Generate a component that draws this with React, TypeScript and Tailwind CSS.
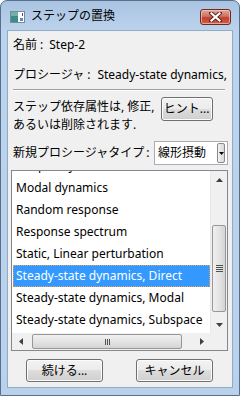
import React from "react";

const FONT = { fontFamily: '"Noto Sans", "Noto Sans CJK JP", sans-serif' };

function WinButton({ children, className }: { children: React.ReactNode; className: string }) {
  return (
    <div
      className={`flex items-center justify-center rounded-[3px] border border-[#707070] bg-[linear-gradient(#f2f2f2_0%,#ebebeb_50%,#dddddd_50%,#cfcfcf_100%)] text-[12px] text-black shadow-[inset_0_0_0_1px_#fcfcfc] ${className}`}
    >
      {children}
    </div>
  );
}

function UpArrow() {
  return (
    <svg width="7" height="4" viewBox="0 0 7 4">
      <path d="M0 4 L3.5 0 L7 4 Z" fill="#404040" />
    </svg>
  );
}
function DownArrow() {
  return (
    <svg width="7" height="4" viewBox="0 0 7 4">
      <path d="M0 0 L3.5 4 L7 0 Z" fill="#404040" />
    </svg>
  );
}
function LeftArrow() {
  return (
    <svg width="4" height="7" viewBox="0 0 4 7">
      <path d="M4 0 L0 3.5 L4 7 Z" fill="#404040" />
    </svg>
  );
}
function RightArrow() {
  return (
    <svg width="4" height="7" viewBox="0 0 4 7">
      <path d="M0 0 L4 3.5 L0 7 Z" fill="#404040" />
    </svg>
  );
}

const items = [
  "Frequency",
  "Modal dynamics",
  "Random response",
  "Response spectrum",
  "Static, Linear perturbation",
  "Steady-state dynamics, Direct",
  "Steady-state dynamics, Modal",
  "Steady-state dynamics, Subspace",
];

export default function App() {
  return (
    <div
      style={FONT}
      className="flex h-[396px] w-[240px] flex-col overflow-hidden rounded-t-[7px] border border-[#55708f] bg-[linear-gradient(#a9c3e1_0px,#bcd3ec_30px,#b9d1ea_100%)]"
    >
      {/* Title bar */}
      <div className="flex h-[29px] shrink-0 items-center">
        <svg width="15" height="12" viewBox="0 0 15 12" className="ml-[9px] mt-[2px]">
          <rect x="0.5" y="0.5" width="14" height="11" fill="#ffffff" stroke="#7a8a9a" />
          <rect x="1" y="1" width="7" height="10" fill="#3f8a8a" />
          <rect x="1" y="1" width="7" height="4" fill="#6fb0a8" />
          <rect x="10" y="7" width="3" height="3" fill="#5a8fb8" />
          <rect x="12" y="2" width="1" height="3" fill="#555" />
        </svg>
        <span className="ml-[6px] mt-[1px] text-[12px] leading-[16px] text-black">ステップの置換</span>
        <div className="ml-auto mr-[8px] mt-[3px] flex h-[16px] w-[31px] items-center justify-center rounded-[3px] border border-[#6b2a25] bg-[linear-gradient(#e3a59a_0%,#d0705f_45%,#c0402e_55%,#d06048_100%)] shadow-[inset_0_0_0_1px_rgba(255,210,200,0.6)]">
          <svg width="13" height="10" viewBox="0 0 13 10">
            <path d="M2 1 L11 9 M11 1 L2 9" stroke="#5a2a25" strokeWidth="4" strokeLinecap="square" />
            <path d="M2.5 1.5 L10.5 8.5 M10.5 1.5 L2.5 8.5" stroke="#ffffff" strokeWidth="2.2" strokeLinecap="square" />
          </svg>
        </div>
      </div>

      {/* Client area */}
      <div className="mx-[6px] mb-[7px] flex flex-1 flex-col border border-[#91aac6] bg-[#f0f0f0] text-[12px] text-black">
        <div className="ml-[5px] mt-[5px] h-[18px] leading-[18px] whitespace-nowrap">
          <span>名前</span>
          <span className="ml-[3px]">:</span>
          <span className="ml-[6px]">Step-2</span>
        </div>
        <div className="ml-[5px] mt-[12px] h-[18px] w-[216px] overflow-hidden leading-[18px] whitespace-nowrap">
          <span>プロシージャ</span>
          <span className="ml-[3px]">:</span>
          <span className="ml-[7px]">Steady-state dynamics, Direct</span>
        </div>
        <div className="ml-[5px] mt-[5px] h-px w-[212px] bg-[#a0a0a0] shadow-[0_1px_0_#ffffff]" />
        <div className="ml-[5px] mt-[7px] flex items-start">
          <div className="mt-[1px] flex flex-col leading-[18px] whitespace-nowrap">
            <span>ステップ依存属性は, 修正,</span>
            <span>あるいは削除されます.</span>
          </div>
          <WinButton className="ml-[6px] h-[24px] w-[52px]">ヒント...</WinButton>
        </div>
        <div className="ml-[5px] mt-[7px] flex items-center">
          <span className="w-[141px] leading-[18px] whitespace-nowrap">
            新規プロシージャタイプ<span className="ml-[2px]">:</span>
          </span>
          <div className="flex h-[24px] w-[74px] items-center border border-[#abadb3] bg-white">
            <span className="ml-[3px] flex-1 leading-[18px] whitespace-nowrap">線形摂動</span>
            <div className="mr-[2px] flex h-[20px] w-[8px] items-center justify-center rounded-[2px] border border-[#8a8a8a] bg-[linear-gradient(90deg,#f2f2f2,#d8d8d8)]">
              <svg width="5" height="3" viewBox="0 0 5 3">
                <path d="M0 0 L2.5 3 L5 0 Z" fill="#000" />
              </svg>
            </div>
          </div>
        </div>

        {/* Listbox */}
        <div className="ml-[3px] mt-[5px] flex h-[181px] w-[217px] flex-col border border-[#828790] bg-white">
          <div className="flex min-h-0 flex-1">
            <div className="min-w-0 flex-1 overflow-hidden">
              <div className="mt-[-16px] pl-px">
                {items.map((t) => {
                  const sel = t === "Steady-state dynamics, Direct";
                  return (
                    <div
                      key={t}
                      className={
                        sel
                          ? "h-[22px] whitespace-nowrap border border-dotted border-[#e0a060] bg-[#3399ff] pl-[2px] leading-[20px] text-white"
                          : "h-[22px] whitespace-nowrap pl-[3px] leading-[22px]"
                      }
                    >
                      {t}
                    </div>
                  );
                })}
              </div>
            </div>
            {/* vertical scrollbar */}
            <div className="flex w-[17px] flex-col border-l border-[#e8e8e8] bg-[#f0f0f0]">
              <div className="flex h-[17px] items-center justify-center">
                <UpArrow />
              </div>
              <div className="flex flex-1 flex-col">
                <div className="h-[37px]" />
                <div className="mx-px flex h-[87px] items-center justify-center rounded-[2px] border border-[#979797] bg-[linear-gradient(90deg,#f0f0f0,#e4e4e4_50%,#d4d4d4)]">
                  <div className="flex flex-col gap-[1px]">
                    <div className="h-px w-[7px] bg-[#505050]" />
                    <div className="h-px w-[7px] bg-[#505050]" />
                    <div className="h-px w-[7px] bg-[#505050]" />
                    <div className="h-px w-[7px] bg-[#505050]" />
                  </div>
                </div>
              </div>
              <div className="flex h-[17px] items-center justify-center">
                <DownArrow />
              </div>
            </div>
          </div>
          {/* horizontal scrollbar */}
          <div className="flex h-[17px] shrink-0">
            <div className="flex flex-1 items-center bg-[#f0f0f0]">
              <div className="flex w-[17px] items-center justify-center">
                <LeftArrow />
              </div>
              <div className="ml-[3px] flex h-[15px] w-[150px] items-center justify-center rounded-[2px] border border-[#979797] bg-[linear-gradient(#f0f0f0,#e4e4e4_50%,#d4d4d4)]">
                <div className="flex gap-[1px]">
                  <div className="h-[6px] w-px bg-[#505050]" />
                  <div className="h-[6px] w-px bg-[#505050]" />
                  <div className="h-[6px] w-px bg-[#505050]" />
                </div>
              </div>
              <div className="flex-1" />
              <div className="flex w-[17px] items-center justify-center">
                <RightArrow />
              </div>
            </div>
            <div className="w-[17px] bg-[#f0f0f0]" />
          </div>
        </div>

        <div className="mt-[8px] flex">
          <WinButton className="ml-[18px] h-[23px] w-[77px]">続ける...</WinButton>
          <WinButton className="ml-[33px] h-[23px] w-[77px]">キャンセル</WinButton>
        </div>
      </div>
    </div>
  );
}
